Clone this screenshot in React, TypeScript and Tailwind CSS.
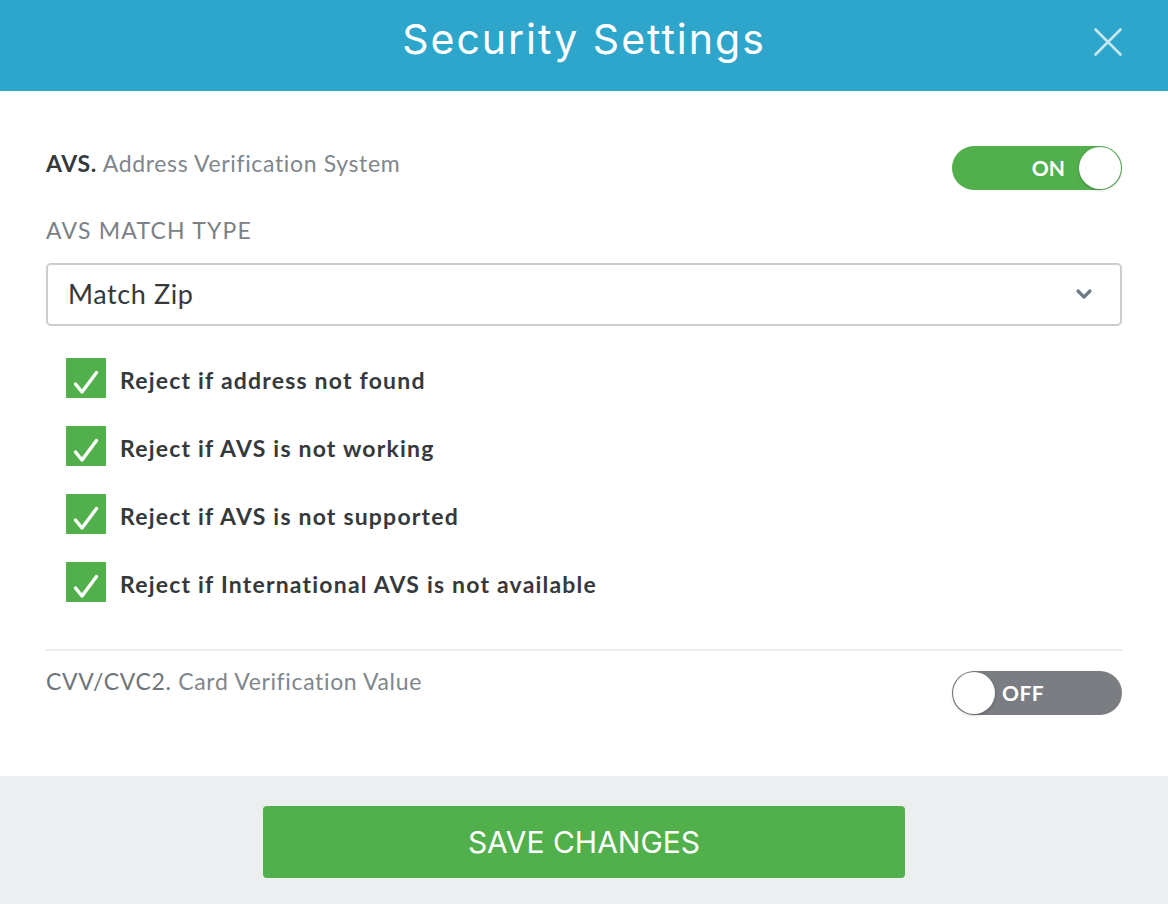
import { ChevronDown } from "lucide-react";

const font = { fontFamily: "Lato, 'Open Sans', sans-serif" };
const heading = { fontFamily: "Inter, Roboto, sans-serif" };

const Toggle = ({ on }: { on: boolean }) => {
  if (on) {
    return (
      <div className="flex h-[44px] w-[170px] items-center justify-end rounded-full bg-[#52b04c] p-[1px]">
        <span className="mr-[14px] text-[21px] font-bold text-white">ON</span>
        <div className="h-[42px] w-[42px] rounded-full bg-white shadow-[0_1px_3px_rgba(0,0,0,0.25)]"></div>
      </div>
    );
  }
  return (
    <div className="flex h-[44px] w-[170px] items-center rounded-full bg-[#7a7e82] p-[1px]">
      <div className="h-[42px] w-[42px] rounded-full bg-white shadow-[0_1px_3px_rgba(0,0,0,0.3)]"></div>
      <span className="ml-[7px] text-[21px] font-bold tracking-[0.5px] text-white">OFF</span>
    </div>
  );
};

const Check = ({ label }: { label: string }) => {
  return (
    <div className="flex h-[40px] items-center">
      <div className="h-[40px] w-[40px] bg-[#52b04c]">
        <svg width="40" height="40" viewBox="0 0 40 40">
          <path
            d="M9.5 26 L16 34 L30.5 14.5"
            fill="none"
            stroke="white"
            strokeWidth="3.4"
            strokeLinecap="round"
            strokeLinejoin="round"
          />
        </svg>
      </div>
      <span className="ml-[14px] pt-[6px] text-[23px] font-bold tracking-[1.2px] text-[#36393c]">
        {label}
      </span>
    </div>
  );
};

export default function App() {
  const checks = [
    "Reject if address not found",
    "Reject if AVS is not working",
    "Reject if AVS is not supported",
    "Reject if International AVS is not available",
  ];

  return (
    <div className="flex h-[904px] w-[1168px] flex-col bg-white" style={font}>
      <div className="relative flex h-[91px] items-center justify-center bg-[#2ea6cb] pb-[12px]">
        <h1 className="text-[41px] font-normal tracking-[2px] text-white" style={heading}>
          Security Settings
        </h1>
        <button className="absolute right-[46px] top-[28px]">
          <svg width="28" height="28" viewBox="0 0 28 28">
            <path
              d="M1.5 1.5 L26.5 26.5 M26.5 1.5 L1.5 26.5"
              stroke="#c6e6f1"
              strokeWidth="2.6"
              strokeLinecap="round"
            />
          </svg>
        </button>
      </div>

      <div className="flex-1 px-[46px] pt-[55px]">
        <div className="flex items-start justify-between">
          <div className="text-[23px] tracking-[0.65px]">
            <span className="font-bold text-[#36393c]">AVS.</span>{" "}
            <span className="text-[#80868b]">Address Verification System</span>
          </div>
          <Toggle on={true} />
        </div>

        <div className="mt-[23px] text-[23px] tracking-[1.2px] text-[#7c8186]">AVS MATCH TYPE</div>

        <div className="mt-[15px] flex h-[63px] items-center justify-between rounded-[5px] border-2 border-[#cbced1] pl-[20px] pr-[24px]">
          <span className="text-[27px] tracking-[0.6px] text-[#36393c]">Match Zip</span>
          <ChevronDown size={24} strokeWidth={3.2} className="text-[#6d7b84]" />
        </div>

        <div className="mt-[32px] flex flex-col gap-[28px] pl-[20px]">
          {checks.map((c) => (
            <Check key={c} label={c} />
          ))}
        </div>

        <div className="mt-[47px] h-[2px] bg-[#ebeced]"></div>

        <div className="mt-[13px] flex items-start justify-between">
          <div className="text-[23px] tracking-[0.65px] text-[#80868b]">
            <span className="text-[#6f7478]">CVV/CVC2.</span> Card Verification Value
          </div>
          <div className="mt-[7px]">
            <Toggle on={false} />
          </div>
        </div>
      </div>

      <div className="flex h-[128px] justify-center bg-[#eceff0] pt-[30px]">
        <button
          className="h-[72px] w-[642px] rounded-[4px] bg-[#52b04c] text-[30px] text-white"
          style={heading}
        >
          SAVE CHANGES
        </button>
      </div>
    </div>
  );
}
